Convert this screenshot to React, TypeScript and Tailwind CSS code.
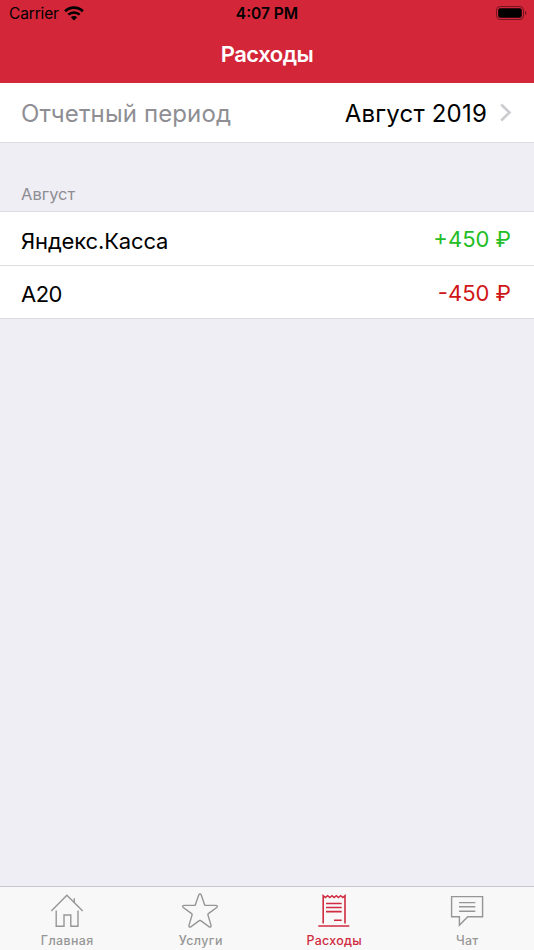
import type { ReactNode } from "react";

type Tab = {
  label: string;
  active?: boolean;
  labelClass: string;
  icon: ReactNode;
};

type Expense = {
  title: string;
  amount: string;
  titleClass: string;
  amountClass: string;
};

const expenses: Expense[] = [
  { title: "Яндекс.Касса", amount: "+450 ₽", titleClass: "pt-[14px] tracking-[-0.14px]", amountClass: "text-[#25bd25]" },
  { title: "A20", amount: "-450 ₽", titleClass: "pt-[13px] tracking-[-0.5px]", amountClass: "text-[#d01616]" },
];

const tabs: Tab[] = [
  {
    label: "Главная",
    labelClass: "pl-px tracking-[0.4px]",
    icon: (
      <>
        <path d="M2.3 18 17.9 2.2 33.7 18" />
        <path d="M25.3 9.6V5.2" />
        <path d="M7.2 17.6v15.7H15V22h6.8v11.3H29V17.6" />
      </>
    ),
  },
  {
    label: "Услуги",
    labelClass: "pl-px tracking-[0.45px]",
    icon: (
      <path
        d="M16.8 1.8Q18 .2 19.2 1.8L22.7 11.9Q22.9 12.4 23.5 12.4H34.2Q36.2 13 34.7 14.5L26.1 20.9Q25.7 21.3 25.9 21.9L29.1 32.5Q29.1 34.6 27.2 33.8L18.7 27.7Q18 27.3 17.3 27.7L8.8 33.8Q6.9 34.6 6.9 32.5L10.1 21.9Q10.3 21.3 9.9 20.9L1.3 14.5Q-.2 13 1.8 12.4H12.5Q13.1 12.4 13.3 11.9Z"
      />
    ),
  },
  {
    label: "Расходы",
    active: true,
    labelClass: "pl-px tracking-[0.3px]",
    icon: (
      <>
        <path d="M7.2 30.5V2.7l2.2 1.8 2.3-1.8 2.1 1.8L16 2.7l2.1 1.8 2.2-1.8 2.2 1.8 2.2-1.8 2.1 1.8L29 2.7v27.8" />
        <path d="M10 10.5h15.7M10 14.5h15.7M10 18.6h15.7M18 27.2h7.7M2.3 33h31" />
      </>
    ),
  },
  {
    label: "Чат",
    labelClass: "tracking-[0.3px]",
    icon: (
      <>
        <path d="M2.6 3.6h31v20.2H18.7l-8.3 8.5v-8.5H2.6Z" />
        <path d="M10 9.6h16.3M10 13.8h16.3M10 18.2h16.3" />
      </>
    ),
  },
];

function WifiIcon() {
  return (
    <svg className="ml-[5px] h-[15px] w-5" viewBox="0 0 20 15" fill="none" stroke="black">
      <path d="M1.1 5.3C6.2.5 13.8.5 18.9 5.3" strokeWidth="2.8" />
      <path d="M4.3 8.7c3.2-3 8.2-3 11.4 0" strokeWidth="2.5" />
      <path d="M10 14.6 6.8 11.3c1.7-1.6 4.7-1.6 6.4 0Z" fill="black" stroke="none" />
    </svg>
  );
}

function BatteryIcon() {
  return (
    <svg className="-mt-px h-[14px] w-[31px]" viewBox="0 0 31 14">
      <rect x=".5" y=".5" width="27" height="13" rx="3.6" fill="none" stroke="#731420" />
      <rect x="2.2" y="2.2" width="23.6" height="9.6" rx="2.1" />
      <path d="M29 4.8c1.9.8 1.9 3.6 0 4.4Z" fill="#731420" />
    </svg>
  );
}

function Header() {
  return (
    <header className="h-[83px] bg-[#d42639]">
      <div className="grid h-[27px] grid-cols-3 items-center pr-[7px] pl-[9px] text-[15.5px]">
        <div className="flex items-center">
          <span className="tracking-[-0.15px]">Carrier</span>
          <WifiIcon />
        </div>
        <span className="pr-[2px] text-center font-semibold">4:07 PM</span>
        <div className="flex justify-end">
          <BatteryIcon />
        </div>
      </div>
      <h1 className="pt-[11px] text-center text-[22px] leading-[32px] font-semibold tracking-[-0.5px] text-white">
        Расходы
      </h1>
    </header>
  );
}

function TabItem({ tab }: { tab: Tab }) {
  return (
    <button
      className={
        "flex flex-1 flex-col items-center pt-[6px] " +
        (tab.active ? "text-[#d02b41]" : "text-[#969696]")
      }
    >
      <svg
        className="h-9 w-9 overflow-visible"
        viewBox="0 0 36 36"
        fill="none"
        stroke="currentColor"
        strokeWidth={tab.active ? 1.6 : 1.4}
      >
        {tab.icon}
      </svg>
      <span className={"mt-[4px] text-[12.4px] leading-4 font-medium " + tab.labelClass}>{tab.label}</span>
    </button>
  );
}

export default function App() {
  return (
    <div className="flex h-[950px] w-[534px] flex-col overflow-hidden bg-[#efeef4] font-['Inter','Liberation_Sans',sans-serif] text-black">
      <Header />

      <div className="flex h-[60px] items-center border-b border-[#dedde3] bg-white pr-[22px] pl-[21px] text-[24px]">
        <span className="flex-1 pt-[3px] tracking-[0.13px] text-[#8e8e93]">Отчетный период</span>
        <span className="pt-[3px] tracking-[0.2px]">Август 2019</span>
        <svg className="ml-[13px] h-[19px] w-3" viewBox="0 0 12 19" fill="none" stroke="#cbcbd0" strokeWidth="2.6">
          <path d="m1.2 1.5 8.3 8-8.3 8" />
        </svg>
      </div>

      <main className="flex-1">
        <h2 className="h-[69px] border-b border-[#dddce2] pt-[40px] pl-[21px] text-[16.5px] leading-[22px] text-[#8d8c92]">
          Август
        </h2>
        <ul>
          {expenses.map((item) => (
            <li
              key={item.title}
              className="flex h-[53.5px] justify-between border-b border-[#dddde1] bg-white pr-[23px] pl-[21px] text-[22px] leading-[30px]"
            >
              <span className={item.titleClass}>{item.title}</span>
              <span className={"pt-[12px] " + item.amountClass}>{item.amount}</span>
            </li>
          ))}
        </ul>
      </main>

      <nav className="flex h-16 border-t border-[#c9c8ce] bg-[#f8f8f8]">
        {tabs.map((tab) => (
          <TabItem key={tab.label} tab={tab} />
        ))}
      </nav>
    </div>
  );
}
